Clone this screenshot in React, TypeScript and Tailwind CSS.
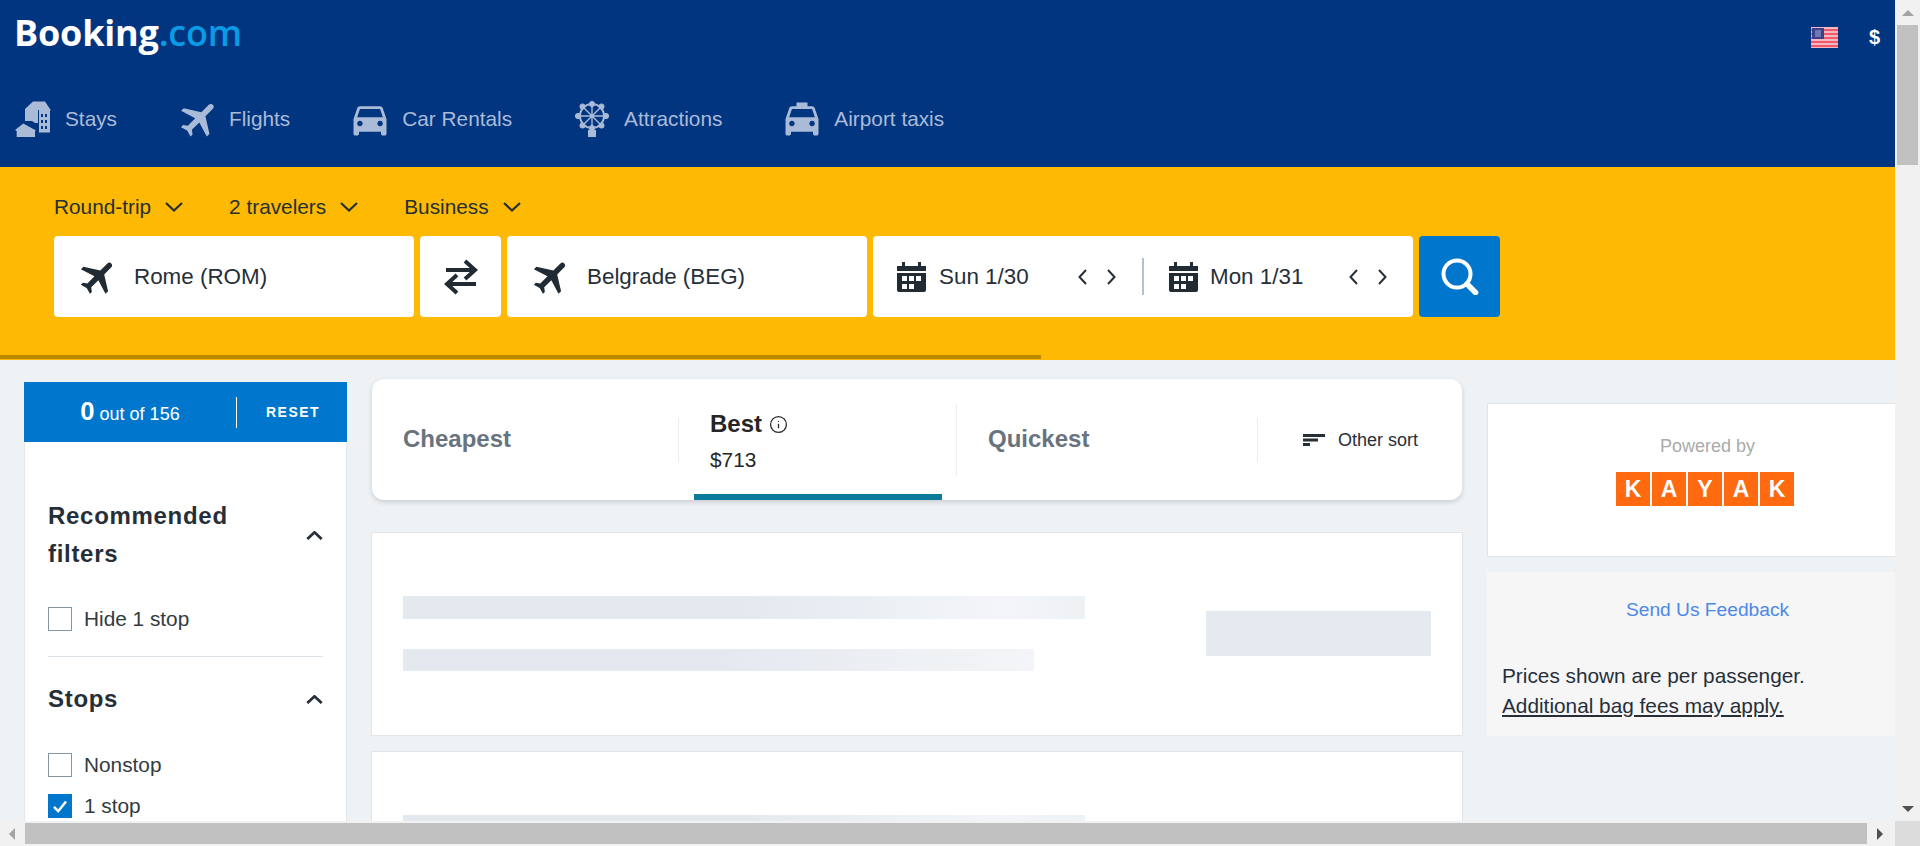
import { Info } from "lucide-react"
import { MdDirectionsCar, MdFlight, MdLocalTaxi } from "react-icons/md"

const navItems = [
  { label: "Stays", icon: <StaysIcon /> },
  { label: "Flights", icon: <MdFlight className="h-[46px] w-[46px] shrink-0 translate-x-[3px] rotate-45" /> },
  { label: "Car Rentals", icon: <MdDirectionsCar className="h-[44px] w-[44px] shrink-0" /> },
  { label: "Attractions", icon: <WheelIcon /> },
  { label: "Airport taxis", icon: <MdLocalTaxi className="h-[44px] w-[44px] shrink-0" /> },
]

function StaysIcon() {
  return (
    <svg viewBox="0 0 36 36" className="h-[36px] w-[36px] shrink-0" fill="currentColor">
      <path d="M10 8 18 .5h12l6 9h-1v22H24V9h-1v13l-3 0-3-2-7 0z" />
      <path d="M0 29 8.300 22.500 21 29.500l-1 .5v6H1.700v-6z" />
      <g fill="#003580">
        <rect x="26" y="13" width="2" height="3" />
        <rect x="30" y="13" width="2" height="3" />
        <rect x="26" y="19" width="2" height="3" />
        <rect x="30" y="19" width="2" height="3" />
        <rect x="26" y="25" width="2" height="3" />
        <rect x="30" y="25" width="2" height="3" />
      </g>
    </svg>
  )
}

function WheelIcon() {
  return (
    <svg viewBox="0 0 34 36" className="h-[36px] w-[34px] shrink-0" fill="currentColor" stroke="currentColor">
      <circle cx="17" cy="15" r="12" fill="none" strokeWidth="2" />
      <path
        d="M17 3v24M5 15h24M8.500 6.500l17 17M25.500 6.500l-17 17"
        strokeWidth="1.400"
      />
      <circle cx="17" cy="3" r="2.600" />
      <circle cx="17" cy="27" r="2.600" />
      <circle cx="3" cy="15" r="2.600" />
      <circle cx="31" cy="15" r="2.600" />
      <circle cx="7.500" cy="5.500" r="2.600" />
      <circle cx="26.500" cy="5.500" r="2.600" />
      <circle cx="7.500" cy="24.500" r="2.600" />
      <circle cx="26.500" cy="24.500" r="2.600" />
      <path d="M13 29h8v7h-8z" strokeWidth="0" />
    </svg>
  )
}

function Chevron({ up = false }: { up?: boolean }) {
  return (
    <svg
      viewBox="0 0 18 10"
      className={up ? "h-[9px] w-[17px] rotate-180" : "h-[10px] w-[18px]"}
      fill="none"
      stroke="#262f38"
      strokeWidth={up ? 3 : 2.2}
    >
      <path d="M1 1l8 7.500L17 1" />
    </svg>
  )
}

function PlaneIcon() {
  return <MdFlight className="-mx-[5px] h-[44px] w-[44px] shrink-0 translate-x-[2px] rotate-45 text-[#212b33]" />
}

function CalendarIcon() {
  return (
    <svg viewBox="0 0 29 30" className="h-[30px] w-[29px] shrink-0" fill="#212b33">
      <path d="M5 0h3v4h13V0h3v4h5v5H0V4h5z" />
      <path d="M0 11h29v17a2 2 0 0 1-2 2H2a2 2 0 0 1-2-2z" />
      <g fill="#fff">
        <rect x="5" y="14" width="5" height="5" />
        <rect x="12" y="14" width="5" height="5" />
        <rect x="19" y="14" width="5" height="5" />
        <rect x="5" y="22" width="5" height="5" />
        <rect x="12" y="22" width="5" height="5" />
      </g>
    </svg>
  )
}

function Arrows() {
  return (
    <div className="flex items-center gap-[20px]">
      <svg viewBox="0 0 9 16" className="h-[16px] w-[9px]" fill="none" stroke="#262f38" strokeWidth="2">
        <path d="M8 1 1.500 8 8 15" />
      </svg>
      <svg viewBox="0 0 9 16" className="h-[16px] w-[9px]" fill="none" stroke="#262f38" strokeWidth="2">
        <path d="M1 1l6.500 7L1 15" />
      </svg>
    </div>
  )
}

function Checkbox({ label, checked = false }: { label: string; checked?: boolean }) {
  return (
    <div className="flex h-[24px] items-center gap-[12px]">
      {checked ? (
        <div className="flex h-[24px] w-[24px] items-center justify-center bg-[#0077cc]">
          <svg viewBox="0 0 16 14" className="h-[13px] w-[16px]" fill="none" stroke="#fff" strokeWidth="2.600">
            <path d="M1.500 7.500 6 12 14.500 1.500" />
          </svg>
        </div>
      ) : (
        <div className="h-[24px] w-[24px] border border-[#8496a3] bg-white" />
      )}
      <span className="text-[20.8px] leading-[24px] text-[#333a40]">{label}</span>
    </div>
  )
}

function ResultCard() {
  return (
    <div className="flex h-[204px] shrink-0 items-center border border-[#e2e4e6] bg-white pb-[2px] pl-[31px]">
      <div className="flex w-[682px] flex-col gap-[30px]">
        <div className="h-[23px] w-[682px] bg-linear-to-r from-[#e4e9f0] from-50% via-[#f3f5f8] via-88% to-[#eef1f4]" />
        <div className="h-[22px] w-[631px] bg-linear-to-r from-[#e4e9f0] from-50% via-[#eff2f5] via-85% to-[#f3f5f8]" />
      </div>
      <div className="ml-[121px] h-[45px] w-[225px] bg-[#e5e9f0]" />
    </div>
  )
}

export default function App() {
  return (
    <div className="flex h-[846px] w-[1920px] flex-col overflow-hidden bg-[#f1f1f1] font-['Liberation_Sans',Arial,sans-serif]">
      <div className="flex h-[821px] w-[1920px]">
        <div className="h-[821px] w-[1895px] shrink-0 overflow-hidden bg-[#eff2f5]">
          {/* Top navy header */}
          <header className="h-[167px] bg-[#02357f]">
            <div className="flex h-[64px] items-start justify-between">
              <div className="ml-[14px] mt-[9px] font-['Open_Sans',sans-serif] text-[36px] leading-[48px] font-bold tracking-[-0.2px] text-white">
                Booking<span className="font-semibold text-[#0a9be6]">.com</span>
              </div>
              <div className="mt-[27px] flex items-start">
                <svg viewBox="0 0 27 21" className="h-[21px] w-[27px]">
                  <rect width="27" height="21" fill="#f4b9c0" />
                  <g fill="#f0596c">
                    <rect y="2" width="27" height="2" />
                    <rect y="6" width="27" height="2" />
                    <rect y="10" width="27" height="2" />
                    <rect y="14" width="27" height="2" />
                    <rect y="18" width="27" height="2" />
                  </g>
                  <rect x="1" y="1" width="12" height="11" fill="#3c3f8c" />
                  <rect x="4" y="3" width="6" height="7" fill="#7278ad" />
                </svg>
                <span className="ml-[31px] mr-[15px] -mt-[2px] text-[20px] leading-[24px] font-bold text-white">$</span>
              </div>
            </div>
            <nav className="mt-[37px] flex items-center gap-[62px] pl-[15px] text-[#aabbd8]">
              {navItems.map((item) => (
                <div key={item.label} className="flex h-[36px] items-center gap-[15px]">
                  <span className="flex h-[36px] w-[35px] items-center justify-center">{item.icon}</span>
                  <span className="text-[20.8px] leading-[24px]">{item.label}</span>
                </div>
              ))}
            </nav>
          </header>

          {/* Yellow search band */}
          <section className="relative h-[193px] bg-[#feba02] pl-[54px] pt-[28px] text-[#262f38]">
            <div className="flex h-[24px] items-center gap-[46px] text-[20.8px]">
              {["Round-trip", "2 travelers", "Business"].map((label) => (
                <div key={label} className="flex items-center gap-[14px]">
                  <span>{label}</span>
                  <Chevron />
                </div>
              ))}
            </div>
            <div className="mt-[17px] flex h-[81px] gap-[6px] text-[22.4px]">
              <div className="flex w-[360px] items-center gap-[20px] rounded-[4px] bg-white pl-[26px]">
                <PlaneIcon />
                <span>Rome (ROM)</span>
              </div>
              <div className="flex w-[81px] items-center justify-center rounded-[4px] bg-white">
                <svg viewBox="0 0 34 36" className="h-[36px] w-[34px]" fill="none" stroke="#212b33" strokeWidth="4">
                  <path d="M2 11h28M21 2l10 9-10 9" />
                  <path d="M32 25H4M13 16l-10 9 10 9" />
                </svg>
              </div>
              <div className="flex w-[360px] items-center gap-[20px] rounded-[4px] bg-white pl-[26px]">
                <PlaneIcon />
                <span>Belgrade (BEG)</span>
              </div>
              <div className="flex w-[540px] items-center rounded-[4px] bg-white pl-[24px]">
                <CalendarIcon />
                <span className="ml-[13px] w-[139px]">Sun 1/30</span>
                <Arrows />
                <div className="ml-[26px] mr-[25px] h-[37px] w-[2px] bg-[#b3c2cf]" />
                <CalendarIcon />
                <span className="ml-[12px] w-[139px]">Mon 1/31</span>
                <Arrows />
              </div>
              <div className="flex w-[81px] items-center justify-center rounded-[4px] bg-[#0077cc]">
                <svg viewBox="0 0 38 37" className="h-[37px] w-[38px]" fill="none" stroke="#fff">
                  <circle cx="16" cy="16" r="13.500" strokeWidth="4" />
                  <path d="M26 26l8.500 8.500" strokeWidth="5.500" strokeLinecap="round" />
                </svg>
              </div>
            </div>
            <div className="absolute bottom-[1px] left-0 h-[4px] w-[1041px] bg-[#b78800]" />
          </section>

          <main className="flex items-start pl-[24px]">
            {/* Filters */}
            <aside className="mt-[22px] w-[323px] shrink-0">
              <div className="flex h-[60px] items-center bg-[#0077cc] text-white">
                <div className="w-[212px] pt-[1px] text-center text-[18px] leading-[30px]">
                  <span className="text-[25.6px] font-bold">0</span> out of 156
                </div>
                <div className="h-[31px] w-px bg-white" />
                <span className="ml-[29px] text-[14px] font-bold tracking-[1.5px]">RESET</span>
              </div>
              <div className="h-[380px] border-x border-[#e4e7ea] bg-white px-[23px] pt-[55px] text-[#262f38]">
                <div className="flex items-center justify-between">
                  <h3 className="w-[210px] text-[24px] leading-[38px] font-bold tracking-[0.7px]">Recommended filters</h3>
                  <Chevron up />
                </div>
                <div className="mt-[34px]">
                  <Checkbox label="Hide 1 stop" />
                </div>
                <div className="mt-[25px] h-px bg-[#dde4ea]" />
                <div className="mt-[23px] flex items-center justify-between">
                  <h3 className="text-[24px] leading-[38px] font-bold tracking-[0.7px]">Stops</h3>
                  <Chevron up />
                </div>
                <div className="mt-[35px] flex flex-col gap-[17px]">
                  <Checkbox label="Nonstop" />
                  <Checkbox label="1 stop" checked />
                </div>
              </div>
            </aside>

            {/* Results */}
            <div className="ml-[24px] w-[1092px] shrink-0">
              <div className="mx-[1px] mt-[19px] flex h-[121px] items-center rounded-[12px] bg-white shadow-[0_2px_5px_rgba(0,0,0,0.16)]">
                <div className="w-[306px] pb-[2px] pl-[31px] text-[24px] font-bold text-[#68737d]">Cheapest</div>
                <div className="h-[44px] w-px bg-[#eeeeee]" />
                <div className="relative h-[121px] w-[277px] pl-[31px] pt-[30px] text-[#262626]">
                  <div className="flex h-[30px] items-center gap-[7px] text-[24px] font-bold">
                    Best
                    <Info className="h-[19px] w-[19px]" strokeWidth={1.6} />
                  </div>
                  <div className="mt-[6px] text-[20.8px] leading-[30px]">$713</div>
                  <div className="absolute bottom-0 left-[15px] h-[6px] w-[248px] bg-[#0b7a9b]" />
                </div>
                <div className="h-[72px] w-px bg-[#eeeeee]" />
                <div className="w-[300px] pb-[2px] pl-[31px] text-[24px] font-bold text-[#68737d]">Quickest</div>
                <div className="h-[44px] w-px bg-[#eeeeee]" />
                <div className="flex items-center gap-[13px] pl-[45px] pt-[1px] text-[18px] text-[#262f38]">
                  <svg viewBox="0 0 22 12" className="h-[12px] w-[22px]" fill="#262f38">
                    <rect width="22" height="3" />
                    <rect y="4.500" width="15" height="3" />
                    <rect y="9" width="7" height="3" />
                  </svg>
                  Other sort
                </div>
              </div>
              <div className="mt-[32px] flex flex-col gap-[15px]">
                <ResultCard />
                <ResultCard />
              </div>
            </div>

            {/* Right column */}
            <div className="ml-[24px] mt-[43px] w-[441px] shrink-0">
              <div className="flex h-[154px] flex-col items-center border border-[#e2e4e6] bg-white pt-[30px]">
                <div className="text-[18px] leading-[24px] text-[#aaaaaa]">Powered by</div>
                <div className="mr-[5px] mt-[14px] flex gap-[2px]">
                  {["K", "A", "Y", "A", "K"].map((letter, index) => (
                    <div
                      key={index}
                      className="flex h-[34px] w-[34px] items-center justify-center bg-[#ff690f] text-[23px] font-bold text-white"
                    >
                      {letter}
                    </div>
                  ))}
                </div>
              </div>
              <div className="mt-[15px] h-[164px] bg-[#f6f6f7] pt-[26px]">
                <div className="text-center text-[19.2px] leading-[24px] text-[#4d88e6]">Send Us Feedback</div>
                <div className="mt-[39px] pl-[15px] text-[20.8px] leading-[30px] text-[#262f38]">
                  <div>Prices shown are per passenger.</div>
                  <div className="underline">Additional bag fees may apply.</div>
                </div>
              </div>
            </div>
          </main>
        </div>

        {/* Vertical scrollbar */}
        <div className="flex w-[25px] flex-col items-center bg-[#f1f1f1]">
          <div className="flex h-[25px] items-center justify-center">
            <div className="h-0 w-0 border-x-[6px] border-b-[6px] border-x-transparent border-b-[#a3a3a3]" />
          </div>
          <div className="h-[140px] w-[21px] bg-[#c1c1c1]" />
          <div className="flex-1" />
          <div className="flex h-[25px] items-center justify-center">
            <div className="h-0 w-0 border-x-[6px] border-t-[6px] border-x-transparent border-t-[#505050]" />
          </div>
        </div>
      </div>

      {/* Horizontal scrollbar */}
      <div className="flex h-[25px] items-center bg-[#f1f1f1]">
        <div className="flex w-[25px] items-center justify-center pr-[2px]">
          <div className="h-0 w-0 border-y-[6px] border-r-[6px] border-y-transparent border-r-[#a3a3a3]" />
        </div>
        <div className="h-[21px] w-[1842px] bg-[#c1c1c1]" />
        <div className="flex w-[28px] items-center justify-center pr-[2px]">
          <div className="h-0 w-0 border-y-[6px] border-l-[6px] border-y-transparent border-l-[#505050]" />
        </div>
        <div className="h-[25px] w-[25px] bg-[#dcdcdc]" />
      </div>
    </div>
  )
}
